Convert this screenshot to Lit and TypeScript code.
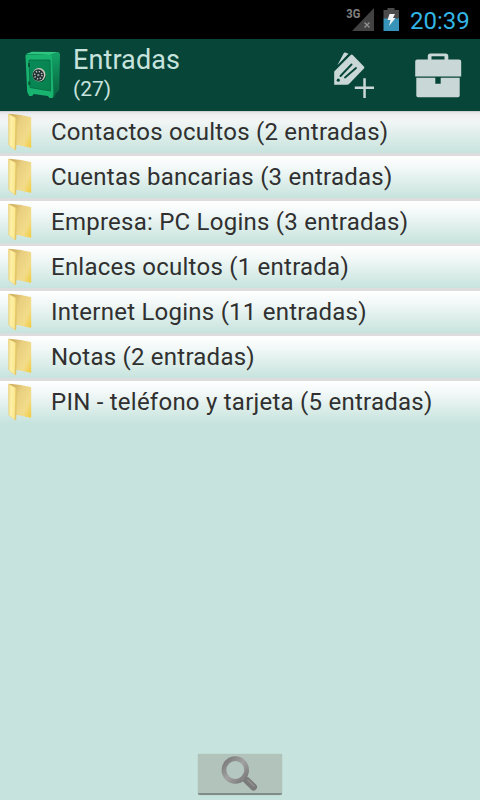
import { LitElement, html, css } from "lit";
import { customElement, property } from "lit/decorators.js";

@customElement("folder-row")
class FolderRow extends LitElement {
  @property() label = "";
  static styles = css`
    :host { display: flex; height: 42px; background: linear-gradient(#ffffff 0%, #f3f9f8 27%, #c7e3dd 100%); align-items: flex-start; }
    .icon { flex: none; width: 51px; height: 42px; display: block; }
    .label { font: 24px/28px Roboto, sans-serif; letter-spacing: 0.24px; color: #303030; padding-top: 7px; white-space: nowrap; }
  `;
  render() {
    return html`
      <svg class="icon" viewBox="0 0 51 42">
        <defs>
          <linearGradient id="back" x1="0" y1=".3" x2="1" y2="1"><stop offset="0" stop-color="#cfae5c" /><stop offset=".3" stop-color="#e9cf80" /><stop offset=".7" stop-color="#f2dc8a" /><stop offset="1" stop-color="#f1cb3c" /></linearGradient>
          <linearGradient id="front" x2="1" y2=".1"><stop offset="0" stop-color="#efd67c" /><stop offset=".35" stop-color="#fdf0a8" /><stop offset=".8" stop-color="#fbe88f" /><stop offset="1" stop-color="#d8b755" /></linearGradient>
        </defs>
        <path d="M9 2.800l12 1.200 9.500 2q.7.200.7 1v29.300q0 .6-.6.500L15 33.500z" fill="url(#back)" />
        <path d="M8.500 3l6.800 3.500q1.200.8 1.200 2.300v15.700l-.5 13.500q-.3 1.500-1.400.7L9.300 34.500q-.6-.6-.6-1.500z" fill="url(#front)" stroke="#e6cc72" stroke-width=".5" />
      </svg>
      <span class="label">${this.label}</span>`;
  }
}

@customElement("status-bar")
class StatusBar extends LitElement {
  static styles = css`
    :host { display: flex; height: 39px; background: #000; justify-content: flex-end; }
    .icons { display: block; width: 64px; height: 39px; }
    .net { font: bold 12.5px Roboto, sans-serif; fill: #818181; }
    .clock { font: 24px/39px Roboto, sans-serif; color: #33b5e5; width: 71px; padding: 2px 0 0 1px; letter-spacing: 0; box-sizing: border-box; white-space: nowrap; }
  `;
  render() {
    return html`
      <svg class="icons" viewBox="345 0 64 39">
        <path d="M374 8v23h-22z" fill="#424242" />
        <text class="net" x="346.300" y="18" textLength="14" lengthAdjust="spacingAndGlyphs">3G</text>
        <path d="M364.500 22.500l5 5m0-5l-5 5" stroke="#929292" stroke-width="1.300" />
        <path d="M383.500 10h4v-2h7v2h4.500v9h-15.500z" fill="#4b4b4b" />
        <path d="M383.500 18.500h15.500v12.500h-15.500z" fill="#3794b8" />
        <path d="M389.500 14h5.500l-2 4h2.500l-6.500 8 1.500-6h-3z" fill="#f1f5f6" />
      </svg>
      <span class="clock">20:39</span>`;
  }
}

@customElement("title-bar")
class TitleBar extends LitElement {
  static styles = css`
    :host { display: flex; height: 72px; background: #084539; }
    svg { display: block; flex: none; }
    .safe { width: 73px; height: 72px; }
    .titles { flex: 1; display: flex; flex-direction: column; color: #c7e3dd; font-family: Roboto, sans-serif; white-space: nowrap; }
    .title { font-size: 27px; line-height: 32px; padding-top: 5px; letter-spacing: 0.1px; }
    .count { font-size: 21px; line-height: 25px; padding-top: 1px; letter-spacing: 0; }
    .actions { width: 160px; height: 72px; }
  `;
  render() {
    return html`
      <svg class="safe" viewBox="0 39 73 72">
        <defs>
          <linearGradient id="door" x2="1" y2="1"><stop offset="0" stop-color="#078b59" /><stop offset="1" stop-color="#08804d" /></linearGradient>
          <linearGradient id="side" x2="0" y2="1"><stop offset="0" stop-color="#13a568" /><stop offset="1" stop-color="#075f3c" /></linearGradient>
        </defs>
        <path d="M50 55l8-3q2 .5 2 3l-.8 35-3.200 3.500-2 4.500-4-2z" fill="url(#side)" />
        <path d="M26 54l6-2.200 26 .2-8 3z" fill="#2cc67e" />
        <path d="M27 54.200l23 .8q2 0 2 2.500l1.500 37-.8 3.500h-3l-2-2-14-2-1.500 2h-3l-2-4L25.500 56q0-1.800 1.500-1.800z" fill="#17b36f" />
        <path d="M29 60h21l.5 31L30 87.500z" fill="url(#door)" stroke="#056943" stroke-width=".8" />
        <path d="M29 63v4m.3 14.500v3.500" stroke="#075637" stroke-width="2" />
        <ellipse cx="40.300" cy="76" rx="5.500" ry="6" fill="#034b35" />
        <ellipse cx="39" cy="74.800" rx="6.500" ry="6.700" fill="#cfcab9" />
        <ellipse cx="38.300" cy="75.100" rx="5.700" ry="5.800" fill="#222f30" />
        <circle cx="38.300" cy="75.100" r="3.700" fill="none" stroke="#bac7c5" stroke-width="1.500" stroke-dasharray="1.300 1.600" />
        <circle cx="38.300" cy="75.100" r="1.200" fill="#8da09e" />
      </svg>
      <div class="titles"><span class="title">Entradas</span><span class="count">(27)</span></div>
      <svg class="actions" viewBox="320 39 160 72">
        <g fill="#c9d8d6">
          <path d="M337.300 65.500l6.400-12.300q.5-1 1.500-.7l3.300 1.300z" />
          <path d="M334.200 71.500l16.500-16.500q1-.8 2 0l11.200 11.500q.8 1 0 2L349 84q-.8.800-2 .8h-12.800z" />
          <path d="M363.300 78.300h2.500v8.300h8.200v2.500h-8.200v9h-2.500v-9h-8.500v-2.500h8.500z" />
          <path fill-rule="evenodd" d="M427.800 59.500v-3.500q0-2.600 2.600-2.600h15.200q2.700 0 2.700 2.600v3.500h10.700q2.200 0 2.200 2v15h-46V61.500q0-2 2-2zM431.500 56.300v3.200h13v-3.200z" />
          <path d="M416.300 77.800h19v6h5.400v-6h19v17.700q0 1.700-1.700 1.700h-40q-1.700 0-1.700-1.700z" />
        </g>
        <path d="M340.500 76l11-11.500m-6.500 13l11-9.500" stroke="#084539" stroke-width="1.900" stroke-linecap="round" />
        <circle cx="338.300" cy="80.200" r="1.600" fill="#084539" />
        <path d="M337 66.500l11-11.300" stroke="#084539" stroke-width=".9" />
      </svg>`;
  }
}

@customElement("app-root")
class AppRoot extends LitElement {
  static styles = css`
    :host { display: flex; flex-direction: column; height: 800px; background: #c7e3dd; overflow: hidden; }
    .list { flex: 1; display: flex; flex-direction: column; }
    .row { border-bottom: 3px solid #dddddd; flex: none; }
    .row:last-child { border-bottom: 0; }
    .row:first-child { background: linear-gradient(#b9bcbf 0, #e4e2e6 1px, #eeeef1 4px, #f1f6f5 10px, #c7e3dd 100%); }
    .search { align-self: center; flex: none; width: 84px; height: 41px; margin-bottom: 5px; padding: 0; border: 0; border-bottom: 2px solid #7f8b87; border-radius: 2px; background: #b2c3bb; box-sizing: border-box; box-shadow: 0 0 1px #8b9893; }
    .glass { display: block; }
  `;
  private folders = [
    "Contactos ocultos (2 entradas)",
    "Cuentas bancarias (3 entradas)",
    "Empresa: PC Logins (3 entradas)",
    "Enlaces ocultos (1 entrada)",
    "Internet Logins (11 entradas)",
    "Notas (2 entradas)",
    "PIN - teléfono y tarjeta (5 entradas)",
  ];
  render() {
    return html`
      <status-bar></status-bar>
      <title-bar></title-bar>
      <div class="list">${this.folders.map((f) => html`<folder-row class="row" .label=${f}></folder-row>`)}</div>
      <button class="search" aria-label="Buscar">
        <svg class="glass" width="84" height="39" viewBox="198 754 84 39">
          <defs><linearGradient id="rim" x2="1" y2="1"><stop offset="0" stop-color="#777" /><stop offset=".5" stop-color="#a2a2a2" /><stop offset="1" stop-color="#747474" /></linearGradient></defs>
          <circle cx="235.300" cy="770" r="11.300" fill="#b4c8c1" stroke="url(#rim)" stroke-width="4.800" />
          <path d="M243 778l3 3" stroke="#8b8b8b" stroke-width="4" />
          <path d="M246.800 780.500l6.700 6.500" stroke="#7b7b7b" stroke-width="7" stroke-linecap="round" />
          <path d="M247.800 780l6 6" stroke="#929292" stroke-width="1.500" stroke-linecap="round" />
        </svg>
      </button>`;
  }
}
